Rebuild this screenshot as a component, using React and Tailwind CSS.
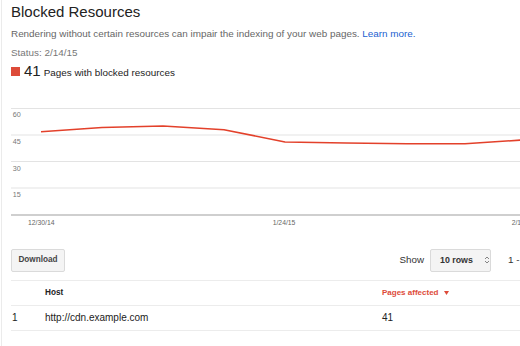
import React from "react";

const points = [
  [30, 30.7],
  [91, 26.5],
  [152, 25],
  [213, 28.7],
  [274, 41],
  [335, 42],
  [396, 42.7],
  [454, 42.7],
  [518, 38.6],
];

const Chart = () => {
  const gridY = [7.5, 34, 60.5, 87];
  const labels = [
    ["60", 16],
    ["45", 43],
    ["30", 69.5],
    ["15", 96],
  ];
  return (
    <svg width="509" height="130" className="block overflow-visible">
      {gridY.map((y) => (
        <line key={y} x1="0" x2="520" y1={y} y2={y} stroke="#e3e3e3" strokeWidth="1" />
      ))}
      <line x1="0" x2="520" y1="114" y2="114" stroke="#cfcfcf" strokeWidth="2" />
      {labels.map(([t, y]) => (
        <text key={t} x="1.7" y={y} fontSize="7.2" fill="#777" fontFamily="Liberation Sans, Arial, sans-serif">
          {t}
        </text>
      ))}
      <text x="17" y="123.5" fontSize="6.8" fill="#666" fontFamily="Liberation Sans, Arial, sans-serif">
        12/30/14
      </text>
      <text x="261.7" y="123.5" fontSize="6.8" fill="#666" fontFamily="Liberation Sans, Arial, sans-serif">
        1/24/15
      </text>
      <text x="500.7" y="123.5" fontSize="6.8" fill="#666" fontFamily="Liberation Sans, Arial, sans-serif">
        2/14/15
      </text>
      <polyline
        points={points.map((p) => p.join(",")).join(" ")}
        fill="none"
        stroke="#e3412b"
        strokeWidth="1.6"
        strokeLinejoin="round"
      />
    </svg>
  );
};

const App = () => {
  return (
    <div className="w-[520px] h-[346px] overflow-hidden bg-white font-['Liberation_Sans',Arial,sans-serif]">
      <div className="ml-px h-full border-l border-[#ebebeb] pl-[9px]">
        <h1 className="pt-[3px] text-[15px] leading-[18px] text-[#222]">Blocked Resources</h1>
        <p className="mt-[7px] whitespace-nowrap text-[9.9px] leading-[12px] text-[#666]">
          Rendering without certain resources can impair the indexing of your web pages.{" "}
          <a className="text-[#1a5fd0]">Learn more.</a>
        </p>
        <p className="mt-[7px] text-[9.9px] leading-[12px] text-[#777]">Status: 2/14/15</p>
        <div className="mt-[3px] flex items-baseline">
          <div className="h-[9px] w-[9px] bg-[#dd4b39]"></div>
          <span className="ml-[4px] text-[15px] leading-[18px] text-[#222]">41</span>
          <span className="ml-[3px] text-[9.9px] text-[#222]">Pages with blocked resources</span>
        </div>

        <div className="mt-[20px]">
          <Chart />
        </div>

        <div className="mt-[18px] flex h-[23px] w-[536px] items-center">
          <button className="h-[23px] w-[54px] rounded-[2px] border border-[#dadada] bg-[#f4f4f4] text-[8.2px] font-bold text-[#444]">
            Download
          </button>
          <div className="ml-auto flex items-center whitespace-nowrap">
            <span className="text-[9.8px] text-[#333]">Show</span>
            <div className="ml-[6px] flex h-[23px] w-[61px] items-center rounded-[2px] border border-[#dadada] bg-[#f4f4f4] pl-[9px]">
              <span className="text-[8.8px] font-bold text-[#333]">10 rows</span>
              <svg width="6" height="10" className="ml-[11px]" viewBox="0 0 6 10">
                <path d="M1 4 L3 2 L5 4" fill="none" stroke="#777" strokeWidth="0.9" />
                <path d="M1 6 L3 8 L5 6" fill="none" stroke="#777" strokeWidth="0.9" />
              </svg>
            </div>
            <span className="ml-[17px] text-[9.9px] text-[#333]">1 - 1 of 1</span>
          </div>
        </div>

        <div className="mt-[8px] border-t border-[#ececec]">
          <div className="grid h-[25px] grid-cols-[34px_337px_1fr] items-center border-b border-[#ececec]">
            <span></span>
            <span className="text-[8.2px] font-bold text-[#222]">Host</span>
            <span className="flex items-center text-[8px] font-bold text-[#dd4b39]">
              Pages affected
              <svg width="5" height="4" viewBox="0 0 5 4" className="ml-[6px]">
                <path d="M0 0 L5 0 L2.5 4 Z" fill="#dd4b39" />
              </svg>
            </span>
          </div>
          <div className="grid h-[25px] grid-cols-[34px_337px_1fr] items-center border-b border-[#ececec] text-[10px] text-[#222]">
            <span className="pl-[1px]">1</span>
            <span>http://cdn.example.com</span>
            <span>41</span>
          </div>
        </div>
      </div>
    </div>
  );
};

export default App;
